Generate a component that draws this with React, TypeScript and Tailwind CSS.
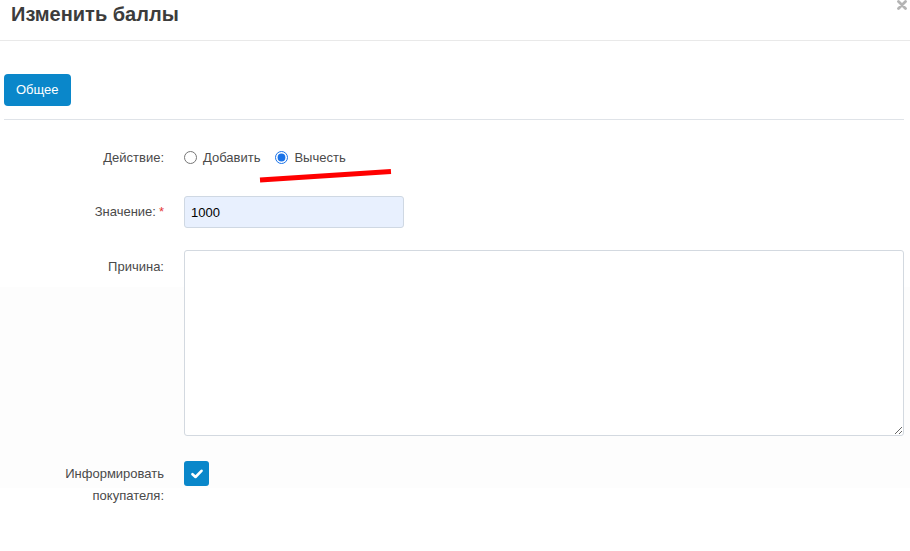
import React, { useState } from 'react';

const font = { fontFamily: '"Liberation Sans", Arial, sans-serif' };

export default function App() {
  const [action, setAction] = useState<'add' | 'sub'>('sub');
  const [value, setValue] = useState('1000');
  const [reason, setReason] = useState('');
  const [notify, setNotify] = useState(true);

  return (
    <div className="relative w-[910px] h-[551px] overflow-hidden bg-white text-[13px] text-[#4a4a4a]" style={font}>
      {/* faint highlighted band behind the lower rows */}
      <div className="absolute left-0 right-0 top-[287px] h-[201px] bg-[#fdfdfd]" />

      {/* header */}
      <div className="relative h-[41px] border-b border-[#e9e9e9] pl-[11px] pt-[2px]">
        <h1 className="text-[20px] leading-[24px] font-bold text-[#3c3c3c]">Изменить баллы</h1>
        <button aria-label="Закрыть" className="absolute left-[897px] top-0">
          <svg width="10" height="10" viewBox="0 0 10 10">
            <path d="M1.5 1.5 L8.5 8.5 M8.5 1.5 L1.5 8.5" stroke="#b4b4b4" strokeWidth="2.8" strokeLinecap="round" />
          </svg>
        </button>
      </div>

      {/* tabs */}
      <div className="relative px-[4px] pt-[33px]">
        <button className="h-[32px] px-[12px] rounded-[4px] bg-[#0a87ca] text-white text-[13px]">Общее</button>
        <div className="mt-[13px] w-[900px] border-t border-[#dfe3e8]" />
      </div>

      {/* form */}
      <div className="relative pt-[24px] flex flex-col">
        <div className="flex items-center h-[27px]">
          <div className="w-[164px] text-right">Действие:</div>
          <div className="ml-[20px] flex items-center">
            <label className="flex items-center gap-[6px]">
              <input
                type="radio"
                name="action"
                checked={action === 'add'}
                onChange={() => setAction('add')}
                className="m-0 w-[13px] h-[13px] accent-[#1a73e8]"
              />
              Добавить
            </label>
            <label className="flex items-center gap-[6px] ml-[15px]">
              <input
                type="radio"
                name="action"
                checked={action === 'sub'}
                onChange={() => setAction('sub')}
                className="m-0 w-[13px] h-[13px] accent-[#1a73e8]"
              />
              Вычесть
            </label>
          </div>
        </div>

        <div className="flex items-center mt-[25px]">
          <div className="w-[164px] text-right">
            Значение:<span className="text-[#e53935] ml-[3px]">*</span>
          </div>
          <input
            value={value}
            onChange={(e) => setValue(e.target.value)}
            className="ml-[20px] w-[220px] h-[32px] px-[6px] rounded-[3px] border border-[#cfd8e3] bg-[#e8f0fe] text-[13px] text-black outline-none"
          />
        </div>

        <div className="flex items-start mt-[22px]">
          <div className="w-[164px] text-right pt-[7px]">Причина:</div>
          <textarea
            value={reason}
            onChange={(e) => setReason(e.target.value)}
            className="ml-[20px] w-[720px] h-[186px] rounded-[3px] border border-[#d3d9e0] bg-white outline-none"
          />
        </div>

        <div className="flex items-start mt-[25px]">
          <div className="w-[164px] text-right leading-[22px] pt-[2px]">
            Информировать
            <br />
            покупателя:
          </div>
          <button
            onClick={() => setNotify(!notify)}
            className="ml-[20px] w-[25px] h-[25px] rounded-[3px] bg-[#0a87ca] flex items-center justify-center"
          >
            {notify && (
              <svg width="12" height="10" viewBox="0 0 12 10">
                <path d="M1.5 5.2 L4.5 8 L10.5 1.8" stroke="white" strokeWidth="2.6" fill="none" strokeLinecap="round" strokeLinejoin="round" />
              </svg>
            )}
          </button>
        </div>
      </div>

      {/* red annotation stroke */}
      <svg className="absolute left-[258px] top-[168px]" width="136" height="16" viewBox="0 0 136 16">
        <path d="M2 12 L133 3.5" stroke="#ff0000" strokeWidth="5" />
      </svg>
    </div>
  );
}
